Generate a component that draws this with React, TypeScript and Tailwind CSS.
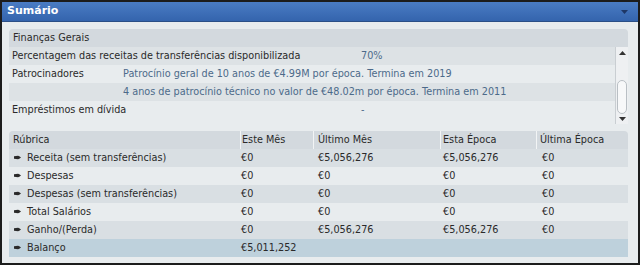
import React from 'react'

const FONT = { fontFamily: '"DejaVu Sans", "Noto Sans", sans-serif' }

const sponsorRows = [
  { label: 'Percentagem das receitas de transferências disponibilizada', value: '70%', indent: false, dark: true },
  { label: 'Patrocinadores', value: 'Patrocínio geral de 10 anos de €4.99M por época. Termina em 2019', indent: true, dark: false },
  { label: '', value: '4 anos de patrocínio técnico no valor de €48.02m por época. Termina em 2011', indent: true, dark: true },
  { label: 'Empréstimos em dívida', value: '-', indent: false, dark: false },
]

const tableRows = [
  ['Receita (sem transferências)', '€0', '€5,056,276', '€5,056,276', '€0'],
  ['Despesas', '€0', '€0', '€0', '€0'],
  ['Despesas (sem transferências)', '€0', '€0', '€0', '€0'],
  ['Total Salários', '€0', '€0', '€0', '€0'],
  ['Ganho/(Perda)', '€0', '€5,056,276', '€5,056,276', '€0'],
]

function Bullet() {
  return (
    <svg width="7" height="5" viewBox="0 0 7 5" className="mr-[6px] shrink-0">
      <path d="M0 1.2 L4 0.7 Q5 0.6 7 2.5 Q5 4.4 4 4.3 L0 3.8 Z" fill="#2a2a2a" />
    </svg>
  )
}

function Scrollbar() {
  return (
    <div className="flex w-[13px] flex-col items-center border-l border-[#c9ced2] bg-[#eef0f2]">
      <div className="flex h-[12px] items-center justify-center">
        <svg width="7" height="4" viewBox="0 0 7 4"><path d="M0 4 L3.5 0 L7 4 Z" fill="#333" /></svg>
      </div>
      <div className="flex-1" />
      <div className="h-[34px] w-[10px] rounded-[5px] border border-[#b9bfc4] bg-[#f7f8f9]" />
      <div className="flex h-[10px] items-center justify-center">
        <svg width="7" height="4" viewBox="0 0 7 4"><path d="M0 0 L3.5 4 L7 0 Z" fill="#333" /></svg>
      </div>
    </div>
  )
}

export default function App() {
  return (
    <div
      className="flex h-[265px] w-[640px] flex-col overflow-hidden border-2 border-[#1c1c1c] bg-[#e8ecee] text-[9.7px] text-[#2a2a2a]"
      style={FONT}
    >
      <div className="flex h-[20px] shrink-0 items-center justify-between border-b border-[#2b4f86] bg-gradient-to-b from-[#4a7cc4] to-[#3464ad] pl-[5px] pr-[10px]">
        <span className="text-[11px] font-bold text-white">Sumário</span>
        <svg width="7" height="4" viewBox="0 0 7 4"><path d="M0 0 L3.5 4 L7 0 Z" fill="#1e3766" /></svg>
      </div>

      <div className="flex flex-1 flex-col pl-[7px] pr-[10px] pt-[7px]">
        <div className="flex h-[95px] flex-col">
          <div className="flex h-[18px] items-center rounded-t-[4px] bg-[#d3d9de] pl-[4px]">Finanças Gerais</div>
          <div className="flex flex-1">
            <div className="flex flex-1 flex-col">
              {sponsorRows.map((r, i) => (
                <div key={i} className={`flex h-[18px] items-center pl-[3px] ${r.dark ? 'bg-[#dde2e5]' : 'bg-[#e8ecee]'}`}>
                  <span className="w-[111px] shrink-0 whitespace-nowrap">{r.label}</span>
                  <span className={`whitespace-nowrap text-[#4c6a8a] ${r.indent ? '' : 'pl-[238px]'}`}>{r.value}</span>
                </div>
              ))}
            </div>
            <Scrollbar />
          </div>
        </div>

        <div className="mt-[7px] flex flex-col">
          <div className="flex h-[18px] items-center rounded-t-[4px] bg-[#d3d9de]">
            <div className="w-[231px] pl-[4px]">Rúbrica</div>
            <div className="h-full w-[73px] border-l border-[#f2f4f5] pl-[1px] leading-[18px]">Este Mês</div>
            <div className="h-full w-[127px] border-l border-[#f2f4f5] pl-[4px] leading-[18px]">Último Mês</div>
            <div className="h-full w-[96px] border-l border-[#f2f4f5] pl-[2px] leading-[18px]">Esta Época</div>
            <div className="h-full flex-1 border-l border-[#f2f4f5] pl-[3px] leading-[18px]">Última Época</div>
          </div>
          {tableRows.map((r, i) => (
            <div key={i} className={`flex h-[18px] items-center ${i % 2 === 0 ? 'bg-[#d9dfe3]' : 'bg-[#e8ecee]'}`}>
              <div className="flex w-[232px] items-center pl-[5px]"><Bullet />{r[0]}</div>
              <div className="w-[74px]">{r[1]}</div>
              <div className="w-[127px] pl-[3px]">{r[2]}</div>
              <div className="w-[97px] pl-[1px]">{r[3]}</div>
              <div className="flex-1 pl-[3px]">{r[4]}</div>
            </div>
          ))}
          <div className="flex h-[18px] items-center bg-[#bed1dc]">
            <div className="flex w-[232px] items-center pl-[5px]"><Bullet />Balanço</div>
            <div>€5,011,252</div>
          </div>
        </div>
      </div>
    </div>
  )
}
